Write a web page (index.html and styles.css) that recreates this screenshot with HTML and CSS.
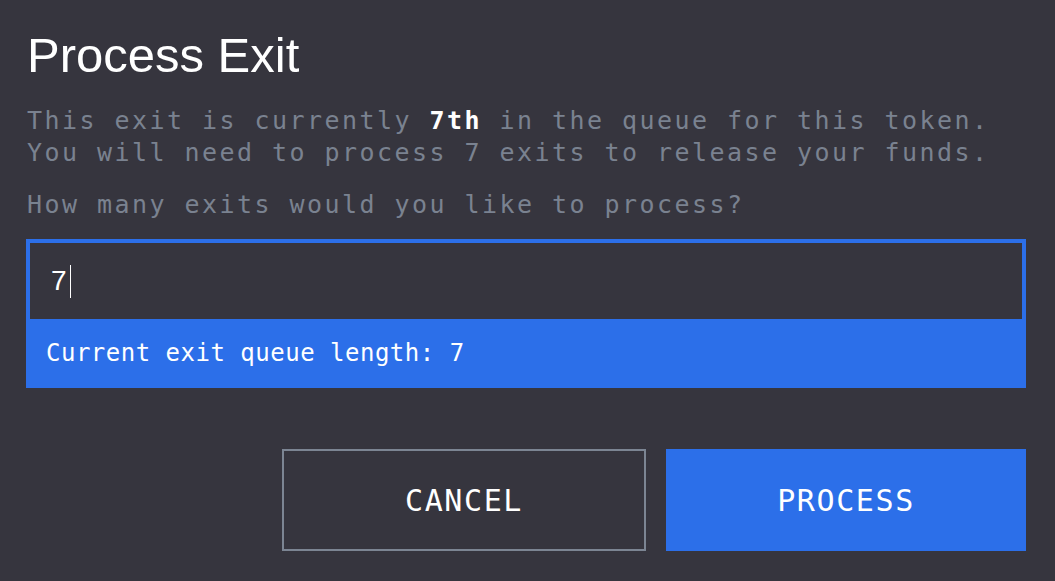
FILE: index.html
```html
<!DOCTYPE html>
<html lang="en">
<head>
<meta charset="utf-8">
<title>Process Exit</title>
<link rel="stylesheet" href="styles.css">
</head>
<body>
<div class="dialog">
  <h1 class="title">Process Exit</h1>
  <p class="text">This exit is currently <strong class="hl">7th</strong> in the queue for this token.<br>You will need to process 7 exits to release your funds.</p>
  <p class="text question">How many exits would you like to process?</p>
  <div class="field">
    <div class="input"><span class="value">7</span><span class="caret"></span></div>
    <div class="hint">Current exit queue length: 7</div>
  </div>
  <div class="actions">
    <button class="btn btn-cancel">CANCEL</button>
    <button class="btn btn-primary">PROCESS</button>
  </div>
</div>
</body>
</html>
```
FILE: styles.css
```css
html, body {
  margin: 0;
  padding: 0;
  background: #36353e;
}
.dialog {
  width: 1055px;
  height: 581px;
  box-sizing: border-box;
  padding: 27px 29px 0 26px;
  display: flex;
  flex-direction: column;
}
.title {
  margin: 0;
  font-family: "Liberation Sans", Arial, sans-serif;
  font-weight: 400;
  font-size: 49px;
  line-height: 56px;
  color: #ffffff;
  padding-left: 1px;
}
.text {
  margin: 22px 0 0 1px;
  font-family: "DejaVu Sans Mono", monospace;
  font-size: 25px;
  line-height: 32px;
  letter-spacing: 2.45px;
  color: #7a8290;
  white-space: nowrap;
}
.question {
  margin-top: 20px;
}
.hl {
  color: #ffffff;
  font-weight: 700;
}
.field {
  margin-top: 18px;
  border: 4px solid #2c6fe9;
  background: #2c6fe9;
  display: flex;
  flex-direction: column;
}
.input {
  height: 76px;
  background: #36353e;
  display: flex;
  align-items: center;
  padding-left: 21px;
}
.value {
  font-family: "Liberation Sans", Arial, sans-serif;
  font-size: 28px;
  color: #ffffff;
  line-height: 32px;
}
.caret {
  width: 1px;
  height: 33px;
  background: #ffffff;
  margin-left: 3px;
}
.hint {
  height: 63px;
  display: flex;
  align-items: center;
  padding: 2px 0 0 16px;
  font-family: "DejaVu Sans Mono", monospace;
  font-size: 24px;
  letter-spacing: 0.5px;
  color: #ffffff;
}
.actions {
  margin-top: 61px;
  display: flex;
  justify-content: flex-end;
  gap: 20px;
}
.btn {
  height: 102px;
  box-sizing: border-box;
  font-family: "DejaVu Sans Mono", monospace;
  font-size: 30px;
  letter-spacing: 1.6px;
  color: #ffffff;
  display: flex;
  align-items: center;
  justify-content: center;
  padding: 0;
  cursor: pointer;
}
.btn-cancel {
  width: 364px;
  background: transparent;
  border: 2px solid #7c8593;
}
.btn-primary {
  width: 360px;
  background: #2c6fe9;
  border: none;
}
```
